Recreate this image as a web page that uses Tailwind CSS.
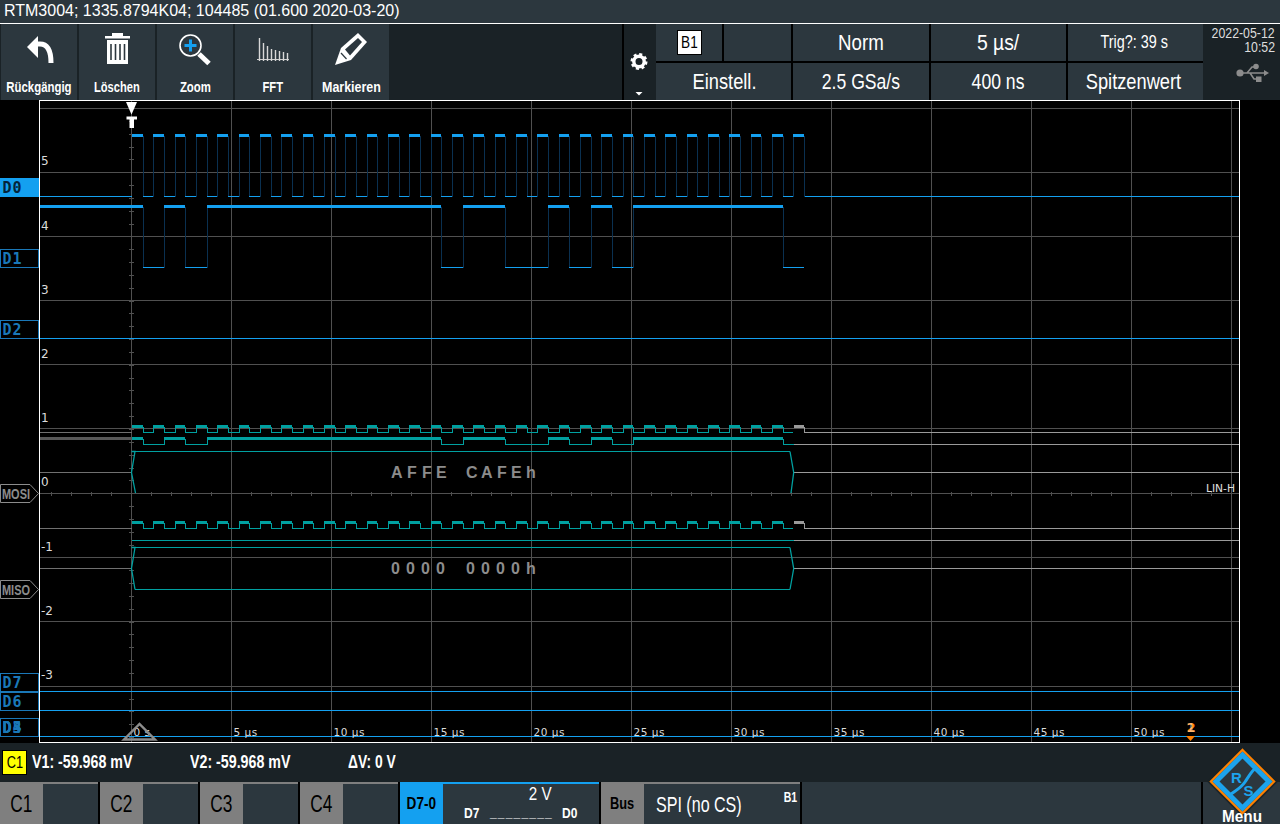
<!DOCTYPE html>
<html lang="de">
<head>
    <meta charset="UTF-8">
    <title>RTM3004</title>
    <script src="https://cdn.jsdelivr.net/npm/@tailwindcss/browser@4"></script>
</head>
<body class="bg-black">
<div class="relative w-[1280px] h-[824px] overflow-hidden flex flex-col bg-black text-white font-['Liberation_Sans',sans-serif]">

    <!-- title bar -->
    <div class="h-[24px] shrink-0 bg-[#2c373e] border-b border-white pl-[4px] text-[16px] leading-[22px] whitespace-nowrap">RTM3004; 1335.8794K04; 104485 (01.600 2020-03-20)</div>

    <!-- toolbar -->
    <div class="h-[76px] shrink-0 flex bg-[#1a2226]">
        <div class="flex gap-[2px] pl-[1px] w-[624px] shrink-0 border-r-2 border-black">
            <div class="w-[76px] bg-[#2c373e] flex flex-col items-center">
                <svg class="w-[76px] h-[50px]" viewBox="1 24 76 50">
                    <path d="M27 47 L38 36 L38 58 Z" fill="#fff"/>
                    <path d="M36 44 L40 44 C47 44 51 50 51 63" fill="none" stroke="#fff" stroke-width="5"/>
                </svg>
                <span class="font-bold text-[15px] leading-[26px] whitespace-nowrap scale-x-[0.76]">Rückgängig</span>
            </div>
            <div class="w-[76px] bg-[#2c373e] flex flex-col items-center">
                <svg class="w-[76px] h-[50px]" viewBox="79 24 76 50">
                    <path d="M105 36 H130 V38.5 H105 Z M112 33 H123 V36 H112 Z M107 40 H128 V64 H107 Z" fill="#fff"/>
                    <path d="M111 44 V60 M115.5 44 V60 M120 44 V60 M124.5 44 V60" stroke="#2c373e" stroke-width="1.6"/>
                </svg>
                <span class="font-bold text-[15px] leading-[26px] scale-x-[0.74]">Löschen</span>
            </div>
            <div class="w-[76px] bg-[#2c373e] flex flex-col items-center">
                <svg class="w-[76px] h-[50px]" viewBox="157 24 76 50">
                    <circle cx="190.5" cy="45.5" r="10.5" fill="none" stroke="#fff" stroke-width="1.6"/>
                    <path d="M184.5 45.5 H196.5 M190.5 39.5 V51.5" stroke="#14a0f0" stroke-width="3"/>
                    <path d="M199 54 L209 63.5" stroke="#fff" stroke-width="5"/>
                </svg>
                <span class="font-bold text-[15px] leading-[26px] scale-x-[0.76]">Zoom</span>
            </div>
            <div class="w-[76px] bg-[#2c373e] flex flex-col items-center">
                <svg class="w-[76px] h-[50px]" viewBox="235 24 76 50">
                    <path d="M257 59.5 H289" stroke="#cfcfcf" stroke-width="1"/>
                    <path d="M259.5 38 V61 M263.5 43 V61 M267.5 46 V61 M271.5 49 V61 M275.5 50 V61 M279.5 51 V61 M283.5 52 V61 M287.5 53 V61" stroke="#d8d8d8" stroke-width="1.4"/>
                </svg>
                <span class="font-bold text-[15px] leading-[26px] scale-x-[0.75]">FFT</span>
            </div>
            <div class="w-[76px] bg-[#2c373e] flex flex-col items-center">
                <svg class="w-[76px] h-[50px]" viewBox="313 24 76 50">
                    <path d="M335 65 L341 48 L358 33 L367 42 L351 60 Z" fill="#fff"/>
                    <path d="M345 49.5 L358 38 L362 42 L350 55.5 Z" fill="#2c373e"/>
                    <path d="M341 53 L346.5 59" stroke="#2c373e" stroke-width="1.2"/>
                </svg>
                <span class="font-bold text-[15px] leading-[26px] scale-x-[0.83]">Markieren</span>
            </div>
        </div>

        <!-- gear panel -->
        <div class="w-[30px] shrink-0 flex flex-col items-center bg-[#1a2226]">
            <svg class="w-[30px] h-[76px]" viewBox="624 24 30 76">
                <circle cx="639" cy="61.5" r="5.2" fill="none" stroke="#fff" stroke-width="3.4"/>
                <circle cx="639" cy="61.5" r="7.2" fill="none" stroke="#fff" stroke-width="2.6" stroke-dasharray="3 2.65"/>
                <path d="M635.5 92 H642.5 L639 95.5 Z" fill="#fff"/>
            </svg>
        </div>

        <!-- settings grid -->
        <div class="w-[547px] shrink-0 ml-[2px] bg-black grid grid-cols-[66px_67px_136px_135px_135px] grid-rows-[37px_37px] gap-[2px] text-[22px]">
            <div class="bg-[#2c373e] flex items-center pl-[21px]">
                <span class="w-[25px] h-[25px] bg-white border border-black text-black flex items-center justify-center"><span class="text-[17px] scale-x-[0.8]">B1</span></span>
            </div>
            <div class="bg-[#2c373e]"></div>
            <div class="bg-[#2c373e] flex items-center justify-center"><span class="scale-x-[0.85]">Norm</span></div>
            <div class="bg-[#2c373e] flex items-center justify-center"><span class="scale-x-[0.88]">5 µs/</span></div>
            <div class="bg-[#2c373e] flex items-center justify-center text-[18px] pr-[3px]"><span class="scale-x-[0.8]">Trig?: 39 s</span></div>
            <div class="col-span-2 bg-[#2c373e] flex items-center justify-center pl-[3px]"><span class="scale-x-[0.83]">Einstell.</span></div>
            <div class="bg-[#2c373e] flex items-center justify-center"><span class="scale-x-[0.8]">2.5 GSa/s</span></div>
            <div class="bg-[#2c373e] flex items-center justify-center"><span class="scale-x-[0.8]">400 ns</span></div>
            <div class="bg-[#2c373e] flex items-center justify-center pr-[4px]"><span class="scale-x-[0.83]">Spitzenwert</span></div>
        </div>

        <!-- date -->
        <div class="flex-1 flex flex-col items-end pr-[5px] pt-[2px] text-[14px] leading-[14px] text-[#dddddd] whitespace-nowrap">
            <span class="origin-right scale-x-[0.88]">2022-05-12</span>
            <span class="origin-right scale-x-[0.88]">10:52</span>
            <svg class="w-[40px] h-[20px] mt-[9px] mr-[2px]" viewBox="1238 70 40 20">
                <path d="M1245 80 H1271 M1252 80 L1257 74 H1261 M1255 80 L1259 86 H1263" fill="none" stroke="#8c8c8c" stroke-width="1.6"/>
                <circle cx="1245" cy="80" r="3.6" fill="#8c8c8c"/>
                <circle cx="1261" cy="73.5" r="2.8" fill="#8c8c8c"/>
                <rect x="1261" y="83.5" width="5.5" height="5.5" fill="#8c8c8c"/>
                <path d="M1269 77 L1274 80 L1269 83 Z" fill="#8c8c8c"/>
            </svg>
        </div>
    </div>

    <!-- plot -->
    <svg id="plot" class="w-[1280px] h-[643px] shrink-0 font-['DejaVu_Sans',sans-serif]" viewBox="0 100 1280 643">
        <g id="grid" stroke="#505050" stroke-width="1" shape-rendering="crispEdges"></g>
        <g id="traces" fill="none" shape-rendering="crispEdges"></g>

        <path d="M131.5 451.5 L135 451.5 L131.5 472.5 L135.5 493 M131.5 547.5 L135 547.5 L131.5 568.5 L135 589.5" fill="none" stroke="#00a0a0" stroke-width="1.3"/>
        <path d="M790 451.5 L793.7 472.5 L791 493 M790 547.5 L793.7 568.5 L790 589.5" fill="none" stroke="#00a0a0" stroke-width="1.3"/>

        <rect x="39.5" y="100.5" width="1200" height="641.5" fill="none" stroke="#fff" stroke-width="1" shape-rendering="crispEdges"/>

        <!-- decoded bus values -->
        <text x="391 407 422 436 451 466 481 497 511 526" y="478" class="text-[16px] font-bold font-['Liberation_Sans',sans-serif]" fill="#8c8c8c">AFFE CAFEh</text>
        <text x="391 406 421 436 451 466 481 496 511 526" y="574" class="text-[16px] font-bold font-['Liberation_Sans',sans-serif]" fill="#8c8c8c">0000 0000h</text>

        <!-- vertical scale -->
        <g class="text-[12px]" fill="#dcdcdc">
            <text x="41" y="165">5</text>
            <text x="41" y="230">4</text>
            <text x="41" y="294">3</text>
            <text x="41" y="358">2</text>
            <text x="41" y="422">1</text>
            <text x="41" y="486">0</text>
            <text x="41" y="551">-1</text>
            <text x="41" y="615">-2</text>
            <text x="41" y="679">-3</text>
        </g>

        <!-- time scale -->
        <g class="text-[10.5px] tracking-[0.5px]" fill="#dcdcdc">
            <text x="133.5" y="736">0 s</text>
            <text x="233.5" y="736">5 µs</text>
            <text x="333.5" y="736">10 µs</text>
            <text x="433.5" y="736">15 µs</text>
            <text x="533.5" y="736">20 µs</text>
            <text x="633.5" y="736">25 µs</text>
            <text x="733.5" y="736">30 µs</text>
            <text x="833.5" y="736">35 µs</text>
            <text x="933.5" y="736">40 µs</text>
            <text x="1033.5" y="736">45 µs</text>
            <text x="1133.5" y="736">50 µs</text>
        </g>
        <text x="1206" y="492" textLength="29" lengthAdjust="spacingAndGlyphs" class="text-[10px]" fill="#e0e0e0">LIN-H</text>

        <!-- trigger markers -->
        <path d="M126 102 H137 L131.5 114.5 Z" fill="#fff"/>
        <path d="M126.5 116.5 H137 V119.5 H134 V128 H129.5 V119.5 H126.5 Z" fill="#fff"/>
        <path d="M124 739.5 L139.5 724 L155 739.5 Z" fill="none" stroke="#8c8c8c" stroke-width="2.4"/>
        <text x="1186.5" y="732" class="text-[13px] font-bold" fill="#ff8000">2</text>
        <text x="1186.5" y="732" class="text-[13px] font-bold" fill="#ffffff" fill-opacity="0.45">1</text>
        <path d="M1186 736 H1195 L1190.5 741 Z" fill="#ff8000"/>

        <!-- digital channel labels -->
        <rect x="0" y="178" width="39" height="19" fill="#14a0f0"/>
        <g class="font-['DejaVu_Sans_Mono',monospace] text-[15px] font-bold tracking-[1px]">
            <text x="2.5" y="193" fill="#04243a">D0</text>
            <g fill="#1a78b8">
                <text x="2.5" y="264">D1</text>
                <text x="2.5" y="335">D2</text>
                <text x="2.5" y="688">D7</text>
                <text x="2.5" y="707">D6</text>
                <text x="2.5" y="733">D5</text>
                <text x="2.5" y="733">D4</text>
                <text x="2.5" y="733">D3</text>
            </g>
        </g>
        <g fill="none" stroke="#1a78b8" stroke-width="1" shape-rendering="crispEdges">
            <rect x="0.5" y="249.5" width="38" height="18"/>
            <rect x="0.5" y="320.5" width="38" height="18"/>
            <rect x="0.5" y="673.5" width="38" height="18"/>
            <rect x="0.5" y="692.5" width="38" height="18"/>
            <rect x="0.5" y="718.5" width="38" height="18"/>
        </g>

        <!-- bus labels -->
        <g fill="none" stroke="#8c8c8c" stroke-width="1">
            <path d="M0.5 484.5 H30 L38.5 493.5 L30 502.5 H0.5 Z"/>
            <path d="M0.5 580.5 H30 L38.5 589.5 L30 598.5 H0.5 Z"/>
        </g>
        <g class="text-[15px] font-bold font-['Liberation_Sans',sans-serif]" fill="#8c8c8c">
            <text x="2" y="499" textLength="28" lengthAdjust="spacingAndGlyphs">MOSI</text>
            <text x="2" y="595" textLength="28" lengthAdjust="spacingAndGlyphs">MISO</text>
        </g>
    </svg>

    <!-- status line -->
    <div class="h-[39px] shrink-0 bg-[#1a2226] flex items-center pl-[2px] text-[18px] font-bold">
        <span class="w-[25px] h-[25px] bg-[#ffff00] border border-black text-black font-normal flex items-center justify-center"><span class="text-[17px] scale-x-[0.75]">C1</span></span>
        <span class="ml-[5px] w-[158px] whitespace-nowrap"><span class="inline-block origin-left scale-x-[0.79]">V1: -59.968 mV</span></span>
        <span class="w-[158px] whitespace-nowrap"><span class="inline-block origin-left scale-x-[0.79]">V2: -59.968 mV</span></span>
        <span class="origin-left scale-x-[0.77] whitespace-nowrap">ΔV: 0 V</span>
    </div>

    <!-- channel bar -->
    <div class="h-[42px] shrink-0 flex bg-black gap-[2px]">
        <div class="w-[98px] flex bg-[#2c373e] border-t-2 border-[#7f7f7f]">
            <span class="w-[43px] bg-[#7f7f7f] text-black text-[24px] flex items-center justify-center"><span class="scale-x-[0.72]">C1</span></span>
        </div>
        <div class="w-[98px] flex bg-[#2c373e] border-t-2 border-[#7f7f7f]">
            <span class="w-[43px] bg-[#7f7f7f] text-black text-[24px] flex items-center justify-center"><span class="scale-x-[0.72]">C2</span></span>
        </div>
        <div class="w-[98px] flex bg-[#2c373e] border-t-2 border-[#7f7f7f]">
            <span class="w-[43px] bg-[#7f7f7f] text-black text-[24px] flex items-center justify-center"><span class="scale-x-[0.72]">C3</span></span>
        </div>
        <div class="w-[98px] flex bg-[#2c373e] border-t-2 border-[#7f7f7f]">
            <span class="w-[43px] bg-[#7f7f7f] text-black text-[24px] flex items-center justify-center"><span class="scale-x-[0.72]">C4</span></span>
        </div>
        <div class="w-[199px] flex bg-[#2c373e] border-t-2 border-[#14a0f0]">
            <span class="w-[43px] bg-[#14a0f0] text-black font-bold text-[16px] flex items-center justify-center"><span class="scale-x-[0.85] whitespace-nowrap">D7-0</span></span>
            <div class="flex-1 flex flex-col text-[15px] font-bold">
                <span class="text-[19px] font-normal leading-[19px] pl-[83px] whitespace-nowrap"><span class="inline-block scale-x-[0.8]">2 V</span></span>
                <div class="flex leading-[20px] pl-[21px] whitespace-nowrap">
                    <span class="w-[26px] origin-left scale-x-[0.8]">D7</span>
                    <span class="w-[72px] text-[12px] tracking-[1.2px]">________</span>
                    <span class="origin-left scale-x-[0.8]">D0</span>
                </div>
            </div>
        </div>
        <div class="w-[199px] flex bg-[#2c373e] border-t-2 border-[#7f7f7f]">
            <span class="w-[43px] bg-[#7f7f7f] text-black font-bold text-[16px] flex items-center justify-center"><span class="scale-x-[0.8]">Bus</span></span>
            <div class="relative flex-1 flex items-center pl-[12px] text-[22px] whitespace-nowrap">
                <span class="origin-left scale-x-[0.73]">SPI (no CS)</span>
                <span class="absolute right-[3px] top-[2px] text-[15px] font-bold origin-right scale-x-[0.7]">B1</span>
            </div>
        </div>
        <div class="flex-1 flex bg-[#2c373e]">
            <div class="w-[401px] border-r-2 border-black"></div>
        </div>
    </div>

    <!-- logo -->
    <svg class="absolute left-[1204px] top-[744px] w-[76px] h-[80px]" viewBox="1204 744 76 80">
        <path d="M1242.5 746 L1278 781.5 L1242.5 817 L1207 781.5 Z" fill="#1a2226" fill-opacity="0.9"/>
        <path d="M1242.5 750 L1274 781.5 L1242.5 813 L1211 781.5 Z" fill="none" stroke="#ff8000" stroke-width="2.4"/>
        <path d="M1242.5 755 L1269 781.5 L1242.5 808 L1216 781.5 Z" fill="#2c373e" stroke="#1ca3ec" stroke-width="5"/>
        <path d="M1228 796 C1238 789 1241 788 1245 782 C1249 776 1252 770 1257 767" fill="none" stroke="#1ca3ec" stroke-width="3"/>
        <text x="1231" y="783" class="text-[15px] font-bold" fill="#1ca3ec">R</text>
        <text x="1243.5" y="795.5" class="text-[15px] font-bold" fill="#1ca3ec">S</text>
        <text x="1222" y="821.5" textLength="40" lengthAdjust="spacingAndGlyphs" class="text-[16px] font-bold" fill="#fff">Menu</text>
    </svg>
</div>

<script>
    const SVG_NS = "http://www.w3.org/2000/svg";
    const grid = document.getElementById("grid");
    const traces = document.getElementById("traces");

    function addPath(parent, d, stroke, width) {
        const p = document.createElementNS(SVG_NS, "path");
        p.setAttribute("d", d);
        if (stroke) p.setAttribute("stroke", stroke);
        if (width) p.setAttribute("stroke-width", width);
        parent.appendChild(p);
    }

    // grid lines and ticks
    let g = "";
    for (let x = 131.5; x < 1239; x += 100) g += `M${x} 101V742`;
    for (const y of [108.5, 172.5, 236.5, 300.5, 364.5, 428.5, 493.5, 557.5, 621.5, 686.5]) g += `M40 ${y}H1239`;
    for (let x = 51.5; x < 1239; x += 20) g += `M${x} 491.5v4`;
    for (let i = 0; i < 50; i++) {
        const y = Math.round(108 + i * 12.84) + 0.5;
        g += `M129 ${y}h5`;
    }
    addPath(grid, g);

    // digital trace: thick high level, thin low level, separate edge colour
    function trace(levels, edges, yHi, yLo, o) {
        let hi = "", lo = "", vert = "";
        for (let i = 0; i < levels.length; i++) {
            const a = edges[i], b = edges[i + 1];
            if (levels[i]) hi += `M${a} ${yHi}H${b}`;
            else lo += `M${a} ${yLo}H${b}`;
            if (i > 0 && levels[i] !== levels[i - 1]) vert += `M${a} ${yHi}V${yLo}`;
        }
        addPath(traces, vert, o.edge, 1);
        addPath(traces, lo, o.color, 1);
        addPath(traces, hi, o.color, 3);
    }

    const half = 64 / 6;
    const clockEdges = [132], clockLevels = [];
    for (let i = 1; i <= 64; i++) {
        clockEdges.push(Math.round(132 + i * half));
        clockLevels.push(i % 2 === 1);
    }

    // AFFE CAFE, data changes on the falling clock edge
    const bits = [..."AFFECAFE"].flatMap(c => parseInt(c, 16).toString(2).padStart(4, "0").split("").map(b => b === "1"));
    const dataEdges = [132], dataLevels = [];
    bits.forEach((b, i) => {
        dataLevels.push(b);
        dataEdges.push(Math.round(142.67 + i * half * 2));
    });

    const blue = { color: "#14a0f0", edge: "#0a3050" };
    const teal = { color: "#00a0a0", edge: "#00a0a0" };
    const gray = "#9a9a9a";

    // D0 / D1
    addPath(traces, "M40 196.5H132M804 196.5H1239", "#14a0f0", 1);
    trace(clockLevels.slice(0, 63), clockEdges.slice(0, 64), 135.5, 196.5, blue);
    addPath(traces, "M804 135.5V196.5", blue.edge, 1);
    addPath(traces, "M40 206.5H132", "#14a0f0", 3);
    trace(dataLevels, dataEdges, 206.5, 267.5, blue);

    // other digital channels
    addPath(traces, "M40 338.5H1239M40 691.5H1239M40 710.5H1239M40 736.5H1239", "#14a0f0", 1);

    // MOSI bus
    addPath(traces, "M40 432.5H132M40 472.5H131M40 528.5H132M40 568.5H131", "#707070", 1);
    addPath(traces, "M40 438.5H132", "#585858", 3);
    trace(clockLevels.slice(0, 62), clockEdges.slice(0, 63), 426.5, 432.5, teal);
    addPath(traces, "M794 426.5H804", gray, 3);
    addPath(traces, "M804 426.5V432.5M804 432.5H1239M794 472.5H1239M794 444.5H1239", gray, 1);
    trace(dataLevels.slice(0, 31), dataEdges.slice(0, 32), 438.5, 444.5, teal);
    addPath(traces, "M783 444.5H794M783 438.5V444.5", teal.color, 1);
    addPath(traces, "M135 451.5H790", teal.color, 1);

    // MISO bus
    trace(clockLevels.slice(0, 62), clockEdges.slice(0, 63), 522.5, 528.5, teal);
    addPath(traces, "M794 522.5H804", gray, 3);
    addPath(traces, "M804 522.5V528.5M804 528.5H1239M794 540.5H1239M794 568.5H1239", gray, 1);
    addPath(traces, "M132 540.5H794M135 547.5H790M135 589.5H790", teal.color, 1);
</script>
</body>
</html>
